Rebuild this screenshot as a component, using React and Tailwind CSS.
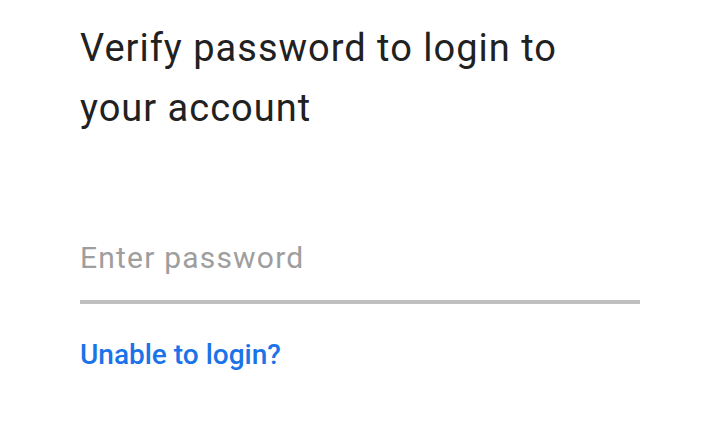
export default function App() {
  return (
    <div className="w-[720px] h-[438px] bg-white overflow-hidden" style={{ fontFamily: "Roboto, sans-serif" }}>
      <div className="pl-[80px] pr-[80px] pt-[18px]">
        <h1 className="text-[38px] leading-[60px] tracking-[1px] text-[#212121] font-normal">
          Verify password to login to<br />your account
        </h1>
        <div className="mt-[102px] border-b-[4px] border-[#bfbfbf] pb-[24px]">
          <div className="text-[30px] leading-[36px] tracking-[1.2px] text-[#9e9e9e]">Enter password</div>
        </div>
        <div className="mt-[35px] text-[28px] leading-[32px] font-medium text-[#1a73e8]">Unable to login?</div>
      </div>
    </div>
  );
}
